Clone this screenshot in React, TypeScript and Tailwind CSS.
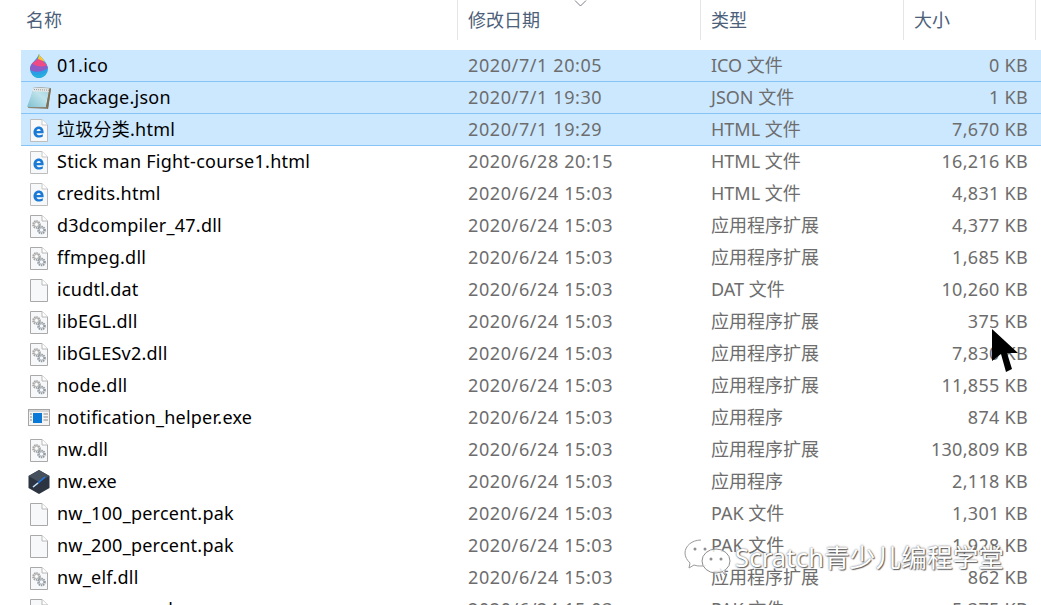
import React from 'react'

type IconKind = 'flame' | 'note' | 'edge' | 'dll' | 'blank' | 'app' | 'nw';

interface FileRow {
  name: string;
  date: string;
  type: string;
  size: string;
  icon: IconKind;
  selected?: boolean;
}

const d = "2020/6/24 15:03";
const ext = "应用程序扩展";

const files: FileRow[] = [
  { name: "01.ico", date: "2020/7/1 20:05", type: "ICO 文件", size: "0 KB", icon: "flame", selected: true },
  { name: "package.json", date: "2020/7/1 19:30", type: "JSON 文件", size: "1 KB", icon: "note", selected: true },
  { name: "垃圾分类.html", date: "2020/7/1 19:29", type: "HTML 文件", size: "7,670 KB", icon: "edge", selected: true },
  { name: "Stick man Fight-course1.html", date: "2020/6/28 20:15", type: "HTML 文件", size: "16,216 KB", icon: "edge" },
  { name: "credits.html", date: d, type: "HTML 文件", size: "4,831 KB", icon: "edge" },
  { name: "d3dcompiler_47.dll", date: d, type: ext, size: "4,377 KB", icon: "dll" },
  { name: "ffmpeg.dll", date: d, type: ext, size: "1,685 KB", icon: "dll" },
  { name: "icudtl.dat", date: d, type: "DAT 文件", size: "10,260 KB", icon: "blank" },
  { name: "libEGL.dll", date: d, type: ext, size: "375 KB", icon: "dll" },
  { name: "libGLESv2.dll", date: d, type: ext, size: "7,830 KB", icon: "dll" },
  { name: "node.dll", date: d, type: ext, size: "11,855 KB", icon: "dll" },
  { name: "notification_helper.exe", date: d, type: "应用程序", size: "874 KB", icon: "app" },
  { name: "nw.dll", date: d, type: ext, size: "130,809 KB", icon: "dll" },
  { name: "nw.exe", date: d, type: "应用程序", size: "2,118 KB", icon: "nw" },
  { name: "nw_100_percent.pak", date: d, type: "PAK 文件", size: "1,301 KB", icon: "blank" },
  { name: "nw_200_percent.pak", date: d, type: "PAK 文件", size: "1,928 KB", icon: "blank" },
  { name: "nw_elf.dll", date: d, type: ext, size: "862 KB", icon: "dll" },
  { name: "resources.pak", date: d, type: "PAK 文件", size: "5,375 KB", icon: "blank" },
];

// blank page with folded corner, shared by a few of the icons
const Page = () => (
  <>
    <path d="M3.5 1.5H15L20.5 7V23.5H3.5Z" fill="#f7f8f9" stroke="#a9a9a9" />
    <path d="M15 1.5V7H20.5" fill="#ffffff" stroke="#b8b8b8" />
  </>
);

const FileIcon: React.FC<{ kind: IconKind }> = ({ kind }) => {
  if (kind === 'flame') {
    return (
      <svg width="24" height="26" viewBox="0 0 24 26">
        <path d="M12 1C13 4 21 9 21 16A9 9 0 0 1 3 16C3 10 10 7 12 1Z" fill="#2a9fe8" />
        <path d="M3.2 14.5C3.6 10.5 8 8 11 6.5C15 8 20 11 20.8 15C16 19 8 20 3.2 17Z" fill="#8d5cc6" />
        <path d="M5 10.5C7 9 10 7 11.2 4.5C14 7 18.5 9.5 20 12.5C15 14.5 9 13.5 5 10.5Z" fill="#ee4b86" />
        <path d="M11 6C11.5 4.5 11.8 2.5 12 1C13 3.5 16.5 6 18 9C15.5 7.5 13 6.5 11 6Z" fill="#fcc52d" />
        <path d="M5 21C10 23 16 22 20 18.5C19 22 15.5 25 12 25C9 25 6.5 23.5 5 21Z" fill="#25b0dc" />
      </svg>
    );
  }
  if (kind === 'note') {
    return (
      <svg width="26" height="26" viewBox="0 0 26 26">
        <defs>
          <linearGradient id="noteBody" x1="0" y1="1" x2="1" y2="0">
            <stop offset="0" stopColor="#7fc0cf" />
            <stop offset="0.6" stopColor="#bfe3ec" />
            <stop offset="1" stopColor="#9fd0de" />
          </linearGradient>
        </defs>
        <path d="M8 2L25 3L22 24L2 23Z" fill="#8c8577" />
        <path d="M8 2.5L23.5 3.5L20 22L1 22Z" fill="url(#noteBody)" />
        <path d="M8 2.5L23.5 3.5L22.7 7L6 6.2Z" fill="#e2e6e6" />
        <path d="M8 4.5L23 5.2" stroke="#9b9b9b" strokeDasharray="1 1" />
        <path d="M23.5 3.5L25 4L22 24L20 22Z" fill="#7f6f50" />
      </svg>
    );
  }
  if (kind === 'edge') {
    return (
      <svg width="24" height="26" viewBox="0 0 24 26">
        <path d="M3.5 2.5H15L20.5 8V24.5H3.5Z" fill="#f7f8f9" stroke="#bdbdbd" />
        <path d="M15 2.5V8H20.5" fill="#ffffff" stroke="#c6c6c6" />
        <path
          fillRule="evenodd"
          d="M6.5 15.2C6.5 12 8.8 9.6 11.8 9.6C14.6 9.6 16.6 11.8 16.6 15V16.2H9.6C9.8 17.6 10.9 18.3 12.3 18.3C13.6 18.3 14.6 18 15.8 17.3V19.4C14.8 20.1 13.4 20.6 11.9 20.6C8.8 20.6 6.5 18.4 6.5 15.2ZM9.6 14.1H13.7C13.6 12.7 12.9 11.9 11.7 11.9C10.6 11.9 9.8 12.7 9.6 14.1Z"
          fill="#1a7ad6"
        />
      </svg>
    );
  }
  if (kind === 'dll') {
    return (
      <svg width="24" height="26" viewBox="0 0 24 26">
        <g transform="translate(0 1)">
          <Page />
          <circle cx="9.5" cy="10.5" r="3.4" fill="none" stroke="#a3a3a3" strokeWidth="1.8" strokeDasharray="1.5 0.7" />
          <circle cx="9.5" cy="10.5" r="2.2" fill="none" stroke="#b4b4b4" />
          <circle cx="14.5" cy="16" r="3.4" fill="none" stroke="#9099a2" strokeWidth="1.8" strokeDasharray="1.5 0.7" />
          <circle cx="14.5" cy="16" r="2.2" fill="none" stroke="#a6adb4" />
        </g>
      </svg>
    );
  }
  if (kind === 'blank') {
    return (
      <svg width="24" height="26" viewBox="0 0 24 26">
        <g transform="translate(0 1)">
          <Page />
        </g>
      </svg>
    );
  }
  if (kind === 'app') {
    return (
      <svg width="24" height="26" viewBox="0 0 24 26">
        <rect x="1.5" y="4.5" width="21" height="16" fill="#f4f4f4" stroke="#a5a5a5" />
        <rect x="2" y="5" width="20" height="2" fill="#d6d6d6" />
        <rect x="6" y="8" width="9" height="10" fill="#0a78d7" />
        <path d="M3 9H5M3 12H5M3 15H5M16.5 9H21M16.5 12H21M16.5 15H21" stroke="#8a8a8a" />
      </svg>
    );
  }
  return (
    <svg width="24" height="26" viewBox="0 0 24 26">
      <path d="M12 1L22.5 7V19L12 25L1.5 19V7Z" fill="#2b3440" />
      <path d="M12 1L22.5 7L12 13L1.5 7Z" fill="#47515e" />
      <path d="M18 8L11 14L6 18" fill="none" stroke="#1e78ea" strokeWidth="1.6" />
      <path d="M11 14L6 18" fill="none" stroke="#d8dde3" strokeWidth="1.4" />
    </svg>
  );
};

const fontStack = "font-['Noto_Sans','Noto_Sans_CJK_SC',sans-serif]";

function App() {
  return (
    <div className={`relative w-[1041px] h-[605px] overflow-hidden bg-white text-[18px] ${fontStack}`}>
      {/* Column headers */}
      <div className="relative flex h-[40px] text-[#4c607a]">
        <div className="w-[458px] pl-[26px] leading-[40px] border-r border-[#e5e5e5]">名称</div>
        <div className="w-[243px] pl-[10px] leading-[40px] border-r border-[#e5e5e5]">修改日期</div>
        <div className="w-[203px] pl-[10px] leading-[40px] border-r border-[#e5e5e5]">类型</div>
        <div className="w-[132px] pl-[10px] leading-[40px] border-r border-[#e5e5e5]">大小</div>
        <svg className="absolute left-[574px] top-0" width="13" height="7" viewBox="0 0 13 7">
          <path d="M1 0.5L6.5 6L12 0.5" fill="none" stroke="#7a7f87" />
        </svg>
      </div>

      {/* File rows */}
      <div className="mt-[10px] ml-[21px]">
        {files.map((f) => (
          <div
            key={f.name}
            className={`flex h-[32px] items-center whitespace-nowrap border-b ${
              f.selected ? "bg-[#cce8ff] border-[#86c4f7]" : "border-transparent"
            }`}
          >
            <div className="flex w-[447px] items-center">
              <div className="flex w-[36px] justify-center">
                <FileIcon kind={f.icon} />
              </div>
              <span className="text-black tracking-[0.25px]">{f.name}</span>
            </div>
            <div className="w-[243px] text-[#6d6d6d] tracking-[0.6px]">{f.date}</div>
            <div className="w-[207px] text-[#6d6d6d]">{f.type}</div>
            <div className="w-[110px] text-right text-[#6d6d6d] tracking-[0.3px]">{f.size}</div>
          </div>
        ))}
      </div>

      {/* Mouse cursor */}
      <svg className="absolute left-[991px] top-[328px]" width="28" height="46" viewBox="0 0 28 46">
        <path d="M1 1L1 33L10 26L15 44L21 41L16 25L27 25Z" fill="#000000" />
      </svg>

      {/* WeChat watermark */}
      <div className="absolute left-[684px] top-[538px] flex items-center">
        <svg width="50" height="40" viewBox="0 0 50 40" fill="none">
          <path d="M17 2C8 2 1 8 1 15C1 19 3 22 6 25L5 30L10 27C13 28 15 28 17 28C19 28 21 28 22 27" fill="#ffffff" fillOpacity="0.75" stroke="#9a9a9a" />
          <ellipse cx="32" cy="23" rx="14" ry="12" fill="#ffffff" fillOpacity="0.8" stroke="#8f8f8f" />
          <path d="M38 33L41 37L41 32" fill="#ffffff" stroke="#8f8f8f" />
          <circle cx="11" cy="11" r="1.5" fill="#8f8f8f" />
          <circle cx="21" cy="11" r="1.5" fill="#8f8f8f" />
          <circle cx="27" cy="21" r="1.5" fill="#8f8f8f" />
          <circle cx="37" cy="21" r="1.5" fill="#8f8f8f" />
        </svg>
        <span className="ml-[1px] text-[25.5px] leading-none tracking-[0.2px] text-white [text-shadow:0_0_2px_#555,1px_1px_1px_#666]">
          Scratch青少儿编程学堂
        </span>
      </div>
    </div>
  );
}

export default App
